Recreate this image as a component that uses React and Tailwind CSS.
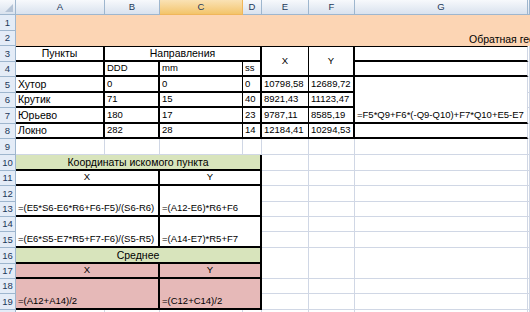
import React from "react";

// excel-like sheet: fixed column widths / row heights, merged cells via spans
const GRID = "border-r border-b border-[#d0d7e5]";
const RH =
  "flex items-center justify-center border-r border-b border-[#9eb6ce] bg-[#e4ecf7] text-[#22385a]";
const CH =
  "flex items-center justify-center border-r border-b border-[#9eb6ce] bg-linear-to-b from-[#f7f9fc] to-[#d9e2ee] text-[#22385a]";

const Cell = ({ c = "", children }) => (
  <div className={"flex items-end overflow-hidden whitespace-nowrap px-[2px] pb-[1px] " + c}>
    {children}
  </div>
);

const Mid = ({ c = "", children }) => (
  <div className={"flex items-end justify-center overflow-hidden whitespace-nowrap pb-[1px] " + c}>
    {children}
  </div>
);

const Blank = ({ c = GRID }) => <div className={c} />;

const points = [
  ["Хутор", "0", "0", "0", "10798,58", "12689,72"],
  ["Крутик", "71", "15", "40", "8921,43", "11123,47"],
  ["Юрьево", "180", "17", "23", "9787,11", "8585,19"],
  ["Локно", "282", "28", "14", "12184,41", "10294,53"],
];

const App = () => {
  return (
    <div className="h-[312px] w-[530px] overflow-hidden bg-white font-['Liberation_Sans',Arial,sans-serif] text-[9.5px] leading-[12px] text-black">
      <div className="grid grid-cols-[16px_89px_55px_83px_19px_47px_46px_173px_2px] grid-rows-[15px_16px_15px_16px_15px_16px_15px_16px_15px_16px_16px_15px_16px_15px_15px_16px_16px_15px_15px_16px_2px]">
        {/* column headers */}
        <div className="relative border-r border-b border-[#9eb6ce] bg-linear-to-b from-[#f7f9fc] to-[#d9e2ee]">
          <svg className="absolute right-[2px] bottom-[2px]" width="8" height="8" viewBox="0 0 8 8">
            <polygon points="8,0 8,8 0,8" fill="#b4c3d6" />
          </svg>
        </div>
        <div className={CH}>A</div>
        <div className={CH}>B</div>
        <div className="flex items-center justify-center border-r border-b border-[#f0b65a] bg-linear-to-b from-[#fae2b4] to-[#f3c469] text-[#22385a]">
          C
        </div>
        <div className={CH}>D</div>
        <div className={CH}>E</div>
        <div className={CH}>F</div>
        <div className={CH}>G</div>
        <div className={CH}></div>

        {/* rows 1-2: title band, merged far past the visible edge */}
        <div className={RH}>1</div>
        <div className="col-span-8 row-span-2 flex items-end overflow-hidden whitespace-nowrap bg-[#fcd5b4] pb-[1px] pl-[453px] text-[10.5px]">
          Обратная гео
        </div>
        <div className={RH}>2</div>

        {/* row 3 */}
        <div className={RH}>3</div>
        <Mid c="text-[10.5px] border-t border-r-2 border-b-2 border-black">Пункты</Mid>
        <Mid c="col-span-3 text-[10.5px] border-t border-r-2 border-b-2 border-black">Направления</Mid>
        <div className="row-span-2 flex items-center justify-center border-t border-r border-b-2 border-black">X</div>
        <div className="row-span-2 flex items-center justify-center border-t border-r-2 border-b-2 border-black">Y</div>
        <Blank c="border-t border-b-2 border-black border-r border-r-[#d0d7e5]" />
        <Blank />

        {/* row 4 */}
        <div className={RH}>4</div>
        <Cell c="border-r-2 border-b-2 border-black" />
        <Cell c="border-r-2 border-b-2 border-black">DDD</Cell>
        <Cell c="border-r border-b-2 border-black">mm</Cell>
        <Cell c="border-r-2 border-b-2 border-black">ss</Cell>
        <Blank c="border-b-2 border-black border-r border-r-[#d0d7e5]" />
        <Blank />

        {/* rows 5-8 */}
        {points.map((p, i) => (
          <React.Fragment key={p[0]}>
            <div className={RH}>{5 + i}</div>
            <Cell c="text-[10.5px] border-r-2 border-b-2 border-black">{p[0]}</Cell>
            <Cell c="border-r-2 border-b-2 border-black">{p[1]}</Cell>
            <Cell c="border-r border-b-2 border-black">{p[2]}</Cell>
            <Cell c="border-r-2 border-b-2 border-black">{p[3]}</Cell>
            <Cell c="border-r border-b-2 border-black">{p[4]}</Cell>
            <Cell c="border-r-2 border-b-2 border-black">{p[5]}</Cell>
            {i === 0 && (
              <Cell c="row-span-3 border-b-2 border-black border-r border-r-[#d0d7e5]">
                =F5*Q9+F6*(-Q9-Q10)+F7*Q10+E5-E7
              </Cell>
            )}
            {i === 3 && <Blank c="border-b-2 border-black border-r border-r-[#d0d7e5]" />}
            <Blank />
          </React.Fragment>
        ))}

        {/* row 9 */}
        <div className={RH}>9</div>
        <Blank />
        <Blank />
        <Blank />
        <Blank />
        <Blank />
        <Blank />
        <Blank />
        <Blank />

        {/* row 10 */}
        <div className={RH}>10</div>
        <Mid c="col-span-4 text-[10.5px] bg-[#d8e4bc] border-r-2 border-b-2 border-black">Координаты искомого пункта</Mid>
        <Blank />
        <Blank />
        <Blank />
        <Blank />

        {/* row 11 */}
        <div className={RH}>11</div>
        <Mid c="col-span-2 border-r-2 border-b-2 border-black">X</Mid>
        <Mid c="col-span-2 border-r-2 border-b-2 border-black">Y</Mid>
        <Blank />
        <Blank />
        <Blank />
        <Blank />

        {/* rows 12-13 */}
        <div className={RH}>12</div>
        <Cell c="col-span-2 row-span-2 border-r-2 border-b-2 border-black">=(E5*S6-E6*R6+F6-F5)/(S6-R6)</Cell>
        <Cell c="col-span-2 row-span-2 border-r-2 border-b-2 border-black">=(A12-E6)*R6+F6</Cell>
        <Blank />
        <Blank />
        <Blank />
        <Blank />
        <div className={RH}>13</div>
        <Blank />
        <Blank />
        <Blank />
        <Blank />

        {/* rows 14-15 */}
        <div className={RH}>14</div>
        <Cell c="col-span-2 row-span-2 border-r-2 border-b-2 border-black">=(E6*S5-E7*R5+F7-F6)/(S5-R5)</Cell>
        <Cell c="col-span-2 row-span-2 border-r-2 border-b-2 border-black">=(A14-E7)*R5+F7</Cell>
        <Blank />
        <Blank />
        <Blank />
        <Blank />
        <div className={RH}>15</div>
        <Blank />
        <Blank />
        <Blank />
        <Blank />

        {/* row 16 */}
        <div className={RH}>16</div>
        <Mid c="col-span-4 text-[10.5px] bg-[#d8e4bc] border-r-2 border-b-2 border-black">Среднее</Mid>
        <Blank c="border-r border-[#d0d7e5]" />
        <Blank c="border-r border-[#d0d7e5]" />
        <Blank c="border-r border-[#d0d7e5]" />
        <Blank c="border-r border-[#d0d7e5]" />

        {/* row 17 */}
        <div className={RH}>17</div>
        <Mid c="col-span-2 bg-[#e6b9b8] border-r-2 border-b-2 border-black">X</Mid>
        <Mid c="col-span-2 bg-[#e6b9b8] border-r-2 border-b-2 border-black">Y</Mid>
        <Blank />
        <Blank />
        <Blank />
        <Blank />

        {/* rows 18-19 */}
        <div className={RH}>18</div>
        <Cell c="col-span-2 row-span-2 bg-[#e6b9b8] border-r-2 border-b-2 border-black">=(A12+A14)/2</Cell>
        <Cell c="col-span-2 row-span-2 bg-[#e6b9b8] border-r-2 border-b-2 border-black">=(C12+C14)/2</Cell>
        <Blank />
        <Blank />
        <Blank />
        <Blank />
        <div className={RH}>19</div>
        <Blank />
        <Blank />
        <Blank />
        <Blank />

        {/* row 20, cut off */}
        <div className="border-r border-[#9eb6ce] bg-[#e4ecf7]" />
        <Blank c="border-r border-[#d0d7e5]" />
        <Blank c="border-r border-[#d0d7e5]" />
        <Blank c="border-r border-[#d0d7e5]" />
        <Blank c="border-r border-[#d0d7e5]" />
        <Blank c="border-r border-[#d0d7e5]" />
        <Blank c="border-r border-[#d0d7e5]" />
        <Blank c="border-r border-[#d0d7e5]" />
        <Blank c="border-r border-[#d0d7e5]" />
      </div>
    </div>
  );
};

export default App;
